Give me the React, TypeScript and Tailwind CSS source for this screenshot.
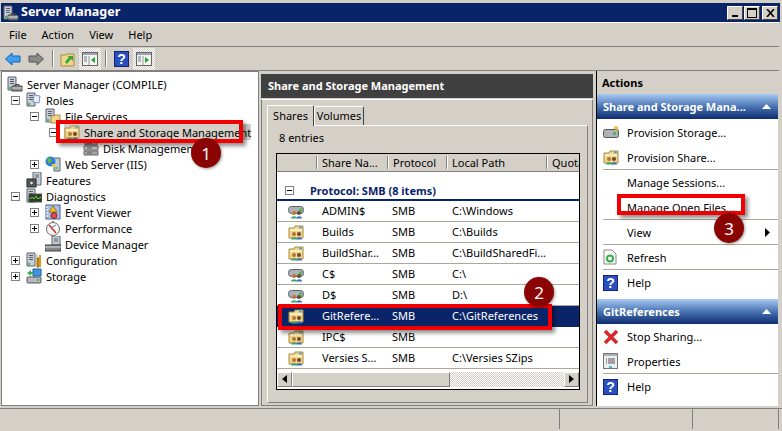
import { ReactNode } from "react";

const GREY = "bg-[#d4d0c8]";

function Tower({ x = 0 }: { x?: number }) {
  return (
    <g transform={`translate(${x} 0)`}>
      <path d="M1 1h8v13H1z" fill="#c8ccd4" stroke="#5c6470" />
      <path d="M3 3.5h4M3 5.5h4M3 7.5h4" stroke="#59616c" />
      <path d="M2 11h2v2H2z" fill="#35c04a" />
    </g>
  );
}

function Case() {
  return (
    <g>
      <path d="M5 10h10v5H5z" fill="#8b8d90" stroke="#44474b" />
      <path d="M5 12h10" stroke="#d8d8d8" />
      <path d="M8 10V8.500h4V10" fill="none" stroke="#44474b" />
    </g>
  );
}

function SharePeople() {
  return (
    <g>
      <circle cx="6" cy="10" r="2" fill="#b8743a" />
      <path d="M3 15.500c0-3 6-3 6 0z" fill="#38a56a" />
      <circle cx="11" cy="10" r="2" fill="#6b4a2a" />
      <path d="M8.500 15.500c0-3 5.500-3 5.500 0z" fill="#3b6cc0" />
    </g>
  );
}

function FolderShare() {
  return (
    <svg width="16" height="16" viewBox="0 0 16 16" className="shrink-0">
      <path d="M1 4h5l1-2h8v12H1z" fill="#f1d68a" stroke="#a98c45" />
      <path d="M2 5h12v2H2z" fill="#fbeebc" />
      <path d="M11 2.500h3v2h-3z" fill="#5fa4d6" />
      <SharePeople />
    </svg>
  );
}

function DriveShare() {
  return (
    <svg width="16" height="16" viewBox="0 0 16 16" className="shrink-0">
      <rect x="0.500" y="3.500" width="15" height="7" rx="3" fill="#aeb2b8" stroke="#5b5f66" />
      <rect x="11" y="5.500" width="3" height="3" fill="#4fb65a" />
      <SharePeople />
    </svg>
  );
}

function TreeIcon({ kind }: { kind: string }) {
  if (kind === "share") return <FolderShare />;
  return (
    <svg width="16" height="16" viewBox="0 0 16 16" className="shrink-0">
      {kind === "server" && (
        <>
          <Tower />
          <Case />
        </>
      )}
      {kind === "roles" && (
        <>
          <Tower />
          <path d="M8 3l6 1-1 7-6-1z" fill="#e8eefa" stroke="#7b93c4" />
        </>
      )}
      {kind === "files" && (
        <>
          <Tower />
          <path d="M6 8h3l1-1h5v8H6z" fill="#f1d68a" stroke="#a98c45" />
        </>
      )}
      {kind === "disk" && (
        <>
          <path d="M2 1h12v4H2z" fill="#b4b6ba" stroke="#666" />
          <path d="M1 6h14v4H1z" fill="#c4c6ca" stroke="#666" />
          <path d="M1 11h14v4H1z" fill="#a4a6aa" stroke="#666" />
          <path d="M4 8h5M4 13h5M4 3h5" stroke="#555" />
        </>
      )}
      {kind === "iis" && (
        <>
          <path d="M9 2h6v13H9z" fill="#c8ccd4" stroke="#5c6470" />
          <path d="M10.500 11h2v2h-2z" fill="#35c04a" />
          <circle cx="5.500" cy="5.500" r="5" fill="#2e7fd4" />
          <path d="M2 3l3-1 2 3-3 3z" fill="#63b84a" />
          <path d="M7 8h3v3H7z" fill="#f0c840" />
        </>
      )}
      {kind === "features" && (
        <>
          <path d="M7 0h8v13H7z" fill="#c8ccd4" stroke="#5c6470" />
          <path d="M9 3h4M9 5h4" stroke="#59616c" />
          <rect x="1" y="7" width="9" height="8" fill="#5b5d60" stroke="#222" />
          <circle cx="5.500" cy="11" r="2" fill="#e0e0e0" stroke="#333" />
        </>
      )}
      {kind === "diag" && (
        <>
          <Tower />
          <rect x="3" y="6" width="13" height="8" fill="#2c3a22" stroke="#555" />
          <path d="M4 11l2-2 2 2 2-3 2 3 3-2" fill="none" stroke="#6fdc50" />
        </>
      )}
      {kind === "event" && (
        <>
          <rect x="1" y="1" width="14" height="14" fill="#a9c0e6" stroke="#4a5f90" />
          <path d="M8 2l4 6H4z" fill="#f2c530" stroke="#92701c" />
          <circle cx="9" cy="11.500" r="3" fill="#d85050" stroke="#8c2020" />
          <path d="M1 3h2M1 6h2M1 9h2M1 12h2" stroke="#fff" />
        </>
      )}
      {kind === "perf" && (
        <>
          <circle cx="8" cy="9" r="6.500" fill="#f6f6f2" stroke="#6a6a6a" />
          <path d="M7 1h2v2H7z" fill="#888" />
          <path d="M4 5l7 8" stroke="#d02c2c" strokeWidth="1.500" />
          <path d="M11 5l-5 3" stroke="#3a7fb0" />
        </>
      )}
      {kind === "device" && (
        <>
          <path d="M7 0h8v9H7z" fill="#c8ccd4" stroke="#5c6470" />
          <path d="M9 3h4M9 5h4" stroke="#59616c" />
          <path d="M0 9h16v6H0z" fill="#85878a" stroke="#3c3e42" />
          <path d="M0 11h16" stroke="#dadada" />
        </>
      )}
      {kind === "config" && (
        <>
          <Tower />
          <path d="M9 1l3 3-2 2z" fill="#b9bdc2" />
          <path d="M11 6h2v9h-2z" fill="#e0a020" stroke="#8a6010" />
          <path d="M14 3v12" stroke="#d89c20" strokeWidth="2" />
        </>
      )}
      {kind === "storage" && (
        <>
          <rect x="1" y="9" width="14" height="6" rx="1" fill="#b8babd" stroke="#555" />
          <rect x="11" y="11" width="2" height="2" fill="#3cc04c" />
          <path d="M7 1h8v7H7z" fill="#3f95e0" stroke="#1f5fa0" />
          <path d="M1 5l4-3v2h2v2H5v2z" fill="#38b050" />
        </>
      )}
    </svg>
  );
}

function Expander({ open }: { open: boolean }) {
  return (
    <span className="relative ml-[4px] block h-[9px] w-[9px] border border-[#808080] bg-white">
      <span className="absolute left-[1px] top-[3px] h-px w-[5px] bg-black" />
      {!open && <span className="absolute left-[3px] top-[1px] h-[5px] w-px bg-black" />}
    </span>
  );
}

const indent: Record<number, string> = {
  0: "pl-[5px]",
  1: "pl-[5px]",
  2: "pl-[24px]",
  3: "pl-[43px]",
  4: "pl-[62px]",
};

const tree = [
  { level: 0, icon: "server", label: "Server Manager (COMPILE)" },
  { level: 1, icon: "roles", label: "Roles", exp: "open" },
  { level: 2, icon: "files", label: "File Services", exp: "open" },
  { level: 3, icon: "share", label: "Share and Storage Management", exp: "open", selected: true },
  { level: 4, icon: "disk", label: "Disk Management" },
  { level: 2, icon: "iis", label: "Web Server (IIS)", exp: "closed" },
  { level: 1, icon: "features", label: "Features" },
  { level: 1, icon: "diag", label: "Diagnostics", exp: "open" },
  { level: 2, icon: "event", label: "Event Viewer", exp: "closed" },
  { level: 2, icon: "perf", label: "Performance", exp: "closed" },
  { level: 2, icon: "device", label: "Device Manager" },
  { level: 1, icon: "config", label: "Configuration", exp: "closed" },
  { level: 1, icon: "storage", label: "Storage", exp: "closed" },
];

function HelpIcon() {
  return (
    <svg width="15" height="16" viewBox="0 0 15 16" className="shrink-0">
      <rect x="0.500" y="0.500" width="14" height="15" fill="#2a4fc0" stroke="#14256e" />
      <text x="7.500" y="13" textAnchor="middle" fontSize="14" fontWeight="700" fill="#fff" fontFamily="Liberation Sans">
        ?
      </text>
    </svg>
  );
}

function PaneToggle({ right }: { right?: boolean }) {
  return (
    <span className="flex h-[22px] w-[22px] items-center justify-center bg-[repeating-conic-gradient(#d4d0c8_0%_25%,#ffffff_0%_50%)] bg-[length:2px_2px]">
      <svg width="16" height="16" viewBox="0 0 16 16">
        <rect x="0.500" y="1.500" width="15" height="13" fill="#f4f4f0" stroke="#666" />
        <path d="M1 2h14v2H1z" fill="#9aa4b4" />
        <path d="M2 6h3M2 8h3M2 10h3" stroke="#6c7c9c" />
        <path d="M7 5v9" stroke="#999" />
        {right ? <path d="M9 6l4 3-4 3z" fill="#25a03c" /> : <path d="M13 6l-4 3 4 3z" fill="#25a03c" />}
      </svg>
    </span>
  );
}

function Toolbar() {
  return (
    <div className="flex h-[24px] items-center border-b border-[#808080] pl-[5px]">
      <svg width="16" height="14" viewBox="0 0 16 14">
        <path d="M0.500 7L7 1v3h8v6H7v3z" fill="#3f9ff0" stroke="#1a5cb0" />
      </svg>
      <svg width="16" height="14" viewBox="0 0 16 14" className="ml-[7px]">
        <path d="M15.500 7L9 1v3H1v6h8v3z" fill="#8a8a8a" stroke="#555" />
      </svg>
      <span className="ml-[8px] h-[17px] w-[2px] border-l border-[#808080] bg-white" />
      <svg width="16" height="16" viewBox="0 0 16 16" className="ml-[6px]">
        <path d="M1 4h5l1-1h7v12H1z" fill="#f1d68a" stroke="#a98c45" />
        <path d="M5 11l4-5-2-1h6v5l-2-2-4 5z" fill="#32a83c" />
      </svg>
      <span className="ml-[3px]">
        <PaneToggle />
      </span>
      <span className="ml-[4px] h-[17px] w-[2px] border-l border-[#808080] bg-white" />
      <span className="ml-[7px]">
        <HelpIcon />
      </span>
      <span className="ml-[4px]">
        <PaneToggle right />
      </span>
    </div>
  );
}

function TreePane() {
  return (
    <div className="h-[335px] w-[258px] border border-[#808080] bg-white pt-[4px] text-black">
      {tree.map((item) => (
        <div key={item.label} className={`flex h-[16px] items-center ${indent[item.level]}`}>
          {item.level > 0 && (
            <span className="w-[19px] shrink-0">{item.exp && <Expander open={item.exp === "open"} />}</span>
          )}
          <span className={`flex h-[16px] items-center ${item.selected ? GREY : ""}`}>
            <TreeIcon kind={item.icon} />
            <span className="ml-[4px] whitespace-nowrap">{item.label}</span>
          </span>
        </div>
      ))}
    </div>
  );
}

const shares = [
  { icon: "drive", name: "ADMIN$", path: "C:\\Windows" },
  { icon: "folder", name: "Builds", path: "C:\\Builds" },
  { icon: "folder", name: "BuildShar...", path: "C:\\BuildSharedFi..." },
  { icon: "drive", name: "C$", path: "C:\\" },
  { icon: "drive", name: "D$", path: "D:\\" },
  { icon: "folder", name: "GitRefere...", path: "C:\\GitReferences", selected: true },
  { icon: "folder", name: "IPC$", path: "" },
  { icon: "folder", name: "Versies S...", path: "C:\\Versies SZips" },
];

function HeaderCell({ width, children }: { width: string; children?: ReactNode }) {
  return (
    <div className={`flex h-[17px] shrink-0 items-center overflow-hidden whitespace-nowrap ${width}`}>
      <span className="mr-[4px] h-[13px] w-[2px] shrink-0 border-l border-[#808080] bg-white" />
      {children}
    </div>
  );
}

function ScrollArrow({ right }: { right?: boolean }) {
  return (
    <span className={`flex h-[15px] w-[15px] shrink-0 items-center justify-center border border-b-[#808080] border-l-white border-r-[#808080] border-t-white ${GREY}`}>
      <svg width="5" height="8" viewBox="0 0 5 8">
        <path d={right ? "M0 0l5 4-5 4z" : "M5 0L0 4l5 4z"} fill="#000" />
      </svg>
    </span>
  );
}

function ListView() {
  return (
    <div className="mx-[8px] mt-[8px] h-[237px] w-[304px] border border-black bg-white">
      <div className={`flex h-[18px] border-b border-[#808080] ${GREY}`}>
        <div className="w-[39px] shrink-0" />
        <HeaderCell width="w-[71px]">Share Na...</HeaderCell>
        <HeaderCell width="w-[59px]">Protocol</HeaderCell>
        <HeaderCell width="w-[100px]">Local Path</HeaderCell>
        <HeaderCell width="w-[33px]">Quota</HeaderCell>
      </div>
      <div className="flex h-[29px] items-end border-b-2 border-[#0a246a] pb-[3px]">
        <span className="mb-[1px] ml-[8px] block">
          <span className="relative block h-[9px] w-[9px] border border-[#808080] bg-white">
            <span className="absolute left-[1px] top-[3px] h-px w-[5px] bg-black" />
          </span>
        </span>
        <span className="ml-[16px] font-bold text-[#0a246a]">Protocol: SMB (8 items)</span>
      </div>
      {shares.map((row) => (
        <div
          key={row.name}
          className={`flex h-[21px] items-center border-b pl-[11px] ${
            row.selected ? "border-[#0a246a] bg-[#0a246a] text-white" : "border-[#aca899] text-black"
          }`}
        >
          {row.icon === "drive" ? <DriveShare /> : <FolderShare />}
          <span className="ml-[18px] w-[70px] shrink-0 whitespace-nowrap">{row.name}</span>
          <span className="w-[60px] shrink-0">SMB</span>
          <span className="whitespace-nowrap">{row.path}</span>
        </div>
      ))}
      <div className="mt-[3px] flex h-[15px]">
        <ScrollArrow />
        <span className={`h-[15px] w-[158px] border border-b-[#808080] border-l-white border-r-[#808080] border-t-white ${GREY}`} />
        <span className="h-[15px] flex-1 bg-[repeating-conic-gradient(#d4d0c8_0%_25%,#ffffff_0%_50%)] bg-[length:2px_2px]" />
        <ScrollArrow right />
      </div>
    </div>
  );
}

function MiddlePane() {
  return (
    <div className="ml-[2px] flex h-[335px] w-[332px] flex-col pt-[3px]">
      <div className="flex h-[24px] items-center bg-[#404040] pl-[7px] font-bold text-white">Share and Storage Management</div>
      <div className="mt-px h-[308px] border border-b-[#808080] border-l-[#808080] border-r-[#808080] border-t-white pl-[5px]">
        <div className="relative z-10 flex h-[25px] items-end pt-[5px]">
          <div className="mb-[-1px] flex h-[21px] w-[47px] items-center justify-center rounded-t-[2px] border border-b-0 border-l-white border-r-[#404040] border-t-white bg-[#d4d0c8]">
            Shares
          </div>
          <div className="flex h-[19px] w-[50px] items-center justify-center rounded-t-[2px] border border-b-0 border-l-white border-r-[#404040] border-t-white">
            Volumes
          </div>
        </div>
        <div className="h-[278px] w-[321px] border border-b-[#808080] border-l-white border-r-[#808080] border-t-white">
          <div className="pl-[11px] pt-[5px] leading-[14px]">8 entries</div>
          <ListView />
        </div>
      </div>
    </div>
  );
}

function ActionHeader({ children }: { children: ReactNode }) {
  return (
    <div className="flex h-[25px] items-center justify-between bg-gradient-to-b from-[#a8caf2] via-[#4a74b4] to-[#0f2c70] pl-[6px] pr-[7px] font-bold text-white">
      <span className="whitespace-nowrap">{children}</span>
      <svg width="9" height="5" viewBox="0 0 9 5">
        <path d="M0 5l4.500-5L9 5z" fill="#fff" />
      </svg>
    </div>
  );
}

function ActionItem({ icon, children, line, arrow }: { icon?: ReactNode; children: ReactNode; line?: boolean; arrow?: boolean }) {
  return (
    <div className="relative ml-[6px]">
      <div className={`flex h-[25px] items-center ${line ? "border-b border-[#aca899]" : ""}`}>
        <span className="flex w-[24px] shrink-0 items-center">{icon}</span>
        <span className="whitespace-nowrap">{children}</span>
        {arrow && (
          <svg width="5" height="9" viewBox="0 0 5 9" className="absolute right-[8px] top-[8px]">
            <path d="M0 0l5 4.500L0 9z" fill="#000" />
          </svg>
        )}
      </div>
    </div>
  );
}

function ActionsPane() {
  return (
    <div className="ml-[3px] h-[335px] w-[182px] border-l border-black bg-white">
      <div className={`flex h-[23px] items-center pl-[5px] font-bold ${GREY}`}>Actions</div>
      <ActionHeader>Share and Storage Mana...</ActionHeader>
      <div className="pt-px">
        <ActionItem
          icon={
            <svg width="16" height="16" viewBox="0 0 16 16">
              <rect x="0.500" y="4.500" width="15" height="8" rx="2" fill="#aeb2b8" stroke="#555" />
              <rect x="10" y="7" width="3" height="3" fill="#55b060" />
              <path d="M13 0l1 2 2 1-2 1-1 2-1-2-2-1 2-1z" fill="#f5b820" />
            </svg>
          }
        >
          Provision Storage...
        </ActionItem>
        <ActionItem icon={<FolderShare />} line>
          Provision Share...
        </ActionItem>
        <ActionItem>Manage Sessions...</ActionItem>
        <ActionItem line>Manage Open Files...</ActionItem>
        <ActionItem line arrow>
          View
        </ActionItem>
        <ActionItem
          icon={
            <svg width="14" height="16" viewBox="0 0 14 16">
              <path d="M1 1h8l4 4v10H1z" fill="#fafafa" stroke="#888" />
              <circle cx="7" cy="9.500" r="3" fill="none" stroke="#30b040" strokeWidth="2" />
            </svg>
          }
          line
        >
          Refresh
        </ActionItem>
        <ActionItem icon={<HelpIcon />}>Help</ActionItem>
      </div>
      <div className="mt-[4px]">
        <ActionHeader>GitReferences</ActionHeader>
      </div>
      <div>
        <ActionItem
          icon={
            <svg width="16" height="16" viewBox="0 0 16 16">
              <path d="M2 2l12 12M14 2L2 14" stroke="#d8282c" strokeWidth="3.500" />
            </svg>
          }
        >
          Stop Sharing...
        </ActionItem>
        <ActionItem
          icon={
            <svg width="15" height="16" viewBox="0 0 15 16">
              <rect x="0.500" y="0.500" width="14" height="15" fill="#eeeeea" stroke="#777" />
              <path d="M1 1h13v2H1z" fill="#a8b0bc" />
              <path d="M3 6h1M5 6h7M3 8h1M5 8h7M3 10h1M5 10h7" stroke="#556" />
              <path d="M6 13h3v2H6z" fill="#4ab4e8" />
            </svg>
          }
          line
        >
          Properties
        </ActionItem>
        <ActionItem icon={<HelpIcon />}>Help</ActionItem>
      </div>
    </div>
  );
}

function Callout({ box, dot, n }: { box: string; dot: string; n: number }) {
  return (
    <>
      <div className={`absolute border-[4px] border-[#f00000] shadow-[3px_3px_4px_rgba(0,0,0,0.45)] ${box}`} />
      <div className={`absolute flex h-[30px] w-[30px] items-center justify-center rounded-full bg-[#8a0404] text-[17px] text-white shadow-[1px_1px_3px_rgba(0,0,0,0.4)] ${dot}`}>
        {n}
      </div>
    </>
  );
}

function CaptionButton({ children }: { children: ReactNode }) {
  return (
    <span className={`flex h-[14px] w-[16px] items-center justify-center border border-b-[#404040] border-l-white border-r-[#404040] border-t-white ${GREY}`}>
      {children}
    </span>
  );
}

export default function App() {
  return (
    <div className={`relative h-[431px] w-[782px] overflow-hidden pt-[3px] font-['Noto_Sans','Liberation_Sans',sans-serif] text-[11px] leading-none text-black ${GREY}`}>
      <div className="ml-px mr-[2px] flex h-[19px] items-center justify-between bg-[#0a246a] pl-[2px] pr-[2px]">
        <div className="flex items-center">
          <TreeIcon kind="server" />
          <span className="ml-[2px] text-[12.500px] font-bold text-white">Server Manager</span>
        </div>
        <div className="flex gap-px">
          <CaptionButton>
            <span className="mt-[6px] h-[2px] w-[6px] bg-black" />
          </CaptionButton>
          <CaptionButton>
            <span className="h-[10px] w-[10px] border border-t-2 border-black" />
          </CaptionButton>
          <span className="ml-px">
            <CaptionButton>
              <svg width="9" height="8" viewBox="0 0 9 8">
                <path d="M1 0l7 8M8 0L1 8" stroke="#000" strokeWidth="1.600" />
              </svg>
            </CaptionButton>
          </span>
        </div>
      </div>

      <div className="mr-[3px]">
        <div className="flex h-[25px] items-center gap-[15px] border-b border-t border-b-[#808080] border-t-white pl-[9px]">
          <span>File</span>
          <span>Action</span>
          <span>View</span>
          <span>Help</span>
        </div>
        <Toolbar />
        <div className="ml-px flex">
          <TreePane />
          <MiddlePane />
          <ActionsPane />
        </div>
      </div>

      <div className="mt-[2px] flex h-[21px] border-t border-[#808080]">
        <div className="w-[560px] border-r border-[#808080]" />
        <div className="ml-px w-[132px] border-r border-[#808080]" />
        <div className="ml-px w-[85px] border-r border-[#808080]" />
      </div>

      <Callout box="left-[56px] top-[120px] h-[23px] w-[187px]" dot="left-[191px] top-[138px]" n={1} />
      <Callout box="left-[278px] top-[304px] h-[26px] w-[274px]" dot="left-[524px] top-[277px]" n={2} />
      <Callout box="left-[617px] top-[194px] h-[21px] w-[128px]" dot="left-[714px] top-[213px]" n={3} />
    </div>
  );
}
